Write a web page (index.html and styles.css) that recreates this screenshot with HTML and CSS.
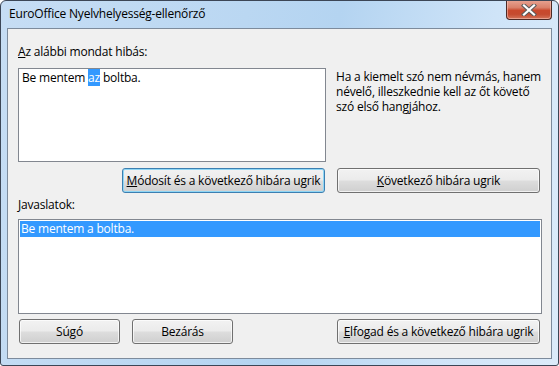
FILE: index.html
```html
<!DOCTYPE html>
<html lang="hu">
<head>
<meta charset="utf-8">
<title>EuroOffice Nyelvhelyesség-ellenőrző</title>
<link rel="stylesheet" href="styles.css">
</head>
<body>
<div class="window">
  <div class="titlebar">
    <span class="title">EuroOffice Nyelvhelyesség-ellenőrző</span>
    <div class="close" aria-label="Bezárás">
      <svg width="16" height="12" viewBox="0 0 16 12">
        <path d="M3 1.5 L13 10.5 M13 1.5 L3 10.5" stroke="#5b5b5b" stroke-width="4.2" stroke-linecap="square" fill="none"/>
        <path d="M3 1.5 L13 10.5 M13 1.5 L3 10.5" stroke="#ffffff" stroke-width="2.2" stroke-linecap="square" fill="none"/>
      </svg>
    </div>
  </div>
  <div class="client">
    <div class="label first"><u>A</u>z alábbi mondat hibás:</div>
    <div class="row1">
      <div class="textbox">Be mentem <span class="hl">az</span> boltba.</div>
      <p class="hint">Ha a kiemelt szó nem névmás, hanem névelő, illeszkednie kell az őt követő szó első hangjához.</p>
    </div>
    <div class="row2">
      <button class="btn default wide"><u>M</u>ódosít és a következő hibára ugrik</button>
      <button class="btn wide"><u>K</u>övetkező hibára ugrik</button>
    </div>
    <div class="label second"><u>J</u>avaslatok:</div>
    <div class="listbox">
      <div class="item selected">Be mentem a boltba.</div>
    </div>
    <div class="row3">
      <button class="btn small">Súgó</button>
      <button class="btn small">Bezárás</button>
      <button class="btn wide push"><u>E</u>lfogad és a következő hibára ugrik</button>
    </div>
  </div>
</div>
</body>
</html>
```

FILE: styles.css
```css
html, body {
  margin: 0;
  padding: 0;
  background: #ffffff;
}

body {
  font-family: "Open Sans", "Noto Sans", sans-serif;
  font-size: 12px;
  letter-spacing: -0.2px;
  color: #000;
}

.window {
  width: 559px;
  height: 366px;
  box-sizing: border-box;
  border: 1px solid #3c4656;
  border-radius: 6px 6px 3px 3px;
  background: linear-gradient(100deg, #c6ddf4 0%, #bad7f2 40%, #b4d4f1 55%, #cfe4f8 80%, #dcebfa 100%);
  padding: 0 6px 6px 6px;
  display: flex;
  flex-direction: column;
  overflow: hidden;
}

.titlebar {
  height: 28px;
  display: flex;
  align-items: flex-start;
  position: relative;
}

.title {
  margin-top: 5px;
  margin-left: 2px;
  line-height: 16px;
  color: #000;
}

.close {
  position: absolute;
  top: -1px;
  right: 0;
  width: 44px;
  height: 19px;
  border: 1px solid #4d2a26;
  border-top: none;
  border-radius: 0 0 4px 4px;
  background: linear-gradient(#e8a493 0%, #d9806a 40%, #c9492d 55%, #c54a2f 75%, #d3745a 100%);
  box-shadow: inset 0 0 0 1px rgba(255, 210, 200, 0.5);
  display: flex;
  align-items: center;
  justify-content: center;
}

.client {
  flex: 1;
  border: 1px solid #7d8b9c;
  background: #f0f0f0;
  padding: 15px 9px 14px 10px;
  display: flex;
  flex-direction: column;
}

.label {
  line-height: 16px;
}

.first {
  margin-bottom: 8px;
}

.row1 {
  display: flex;
  align-items: flex-start;
}

.textbox {
  flex: none;
  border: 1px solid #828790;
  background: #fff;
  padding: 2px 3px;
  box-sizing: border-box;
  height: 94px;
  width: 308px;
  line-height: 14px;
}

.hl {
  background: #3399ff;
  color: #fff;
}

.hint {
  flex: none;
  margin: 0 -8px 0 10px;
  width: 214px;
  line-height: 15px;
  padding-top: 1px;
}

.row2 {
  display: flex;
  margin-top: 6px;
  gap: 12px;
  padding-left: 104px;
}

.btn {
  font: inherit;
  letter-spacing: inherit;
  color: #000;
  height: 25px;
  padding: 0;
  border: 1px solid #707070;
  border-radius: 3px;
  background: linear-gradient(#f2f2f2 0%, #ebebeb 48%, #dddddd 52%, #cfcfcf 100%);
  box-shadow: inset 0 0 0 1px rgba(255, 255, 255, 0.7);
  line-height: 21px;
}

.btn.wide {
  width: 203px;
}

.btn.default {
  border-color: #3c7fb1;
  box-shadow: inset 0 0 0 1px #8fd6f5;
}

.btn.small {
  width: 101px;
}

.second {
  margin-top: 4px;
  margin-bottom: 6px;
}

.listbox {
  width: 524px;
  height: 95px;
  box-sizing: border-box;
  border: 1px solid #828790;
  background: #fff;
  padding: 1px;
}

.item {
  height: 16px;
  line-height: 16px;
  padding-left: 1px;
}

.item.selected {
  background: #3399ff;
  color: #fff;
}

.row3 {
  display: flex;
  gap: 12px;
  margin-top: 5px;
  padding-left: 1px;
}

.push {
  margin-left: auto;
  margin-right: 2px;
}
```
